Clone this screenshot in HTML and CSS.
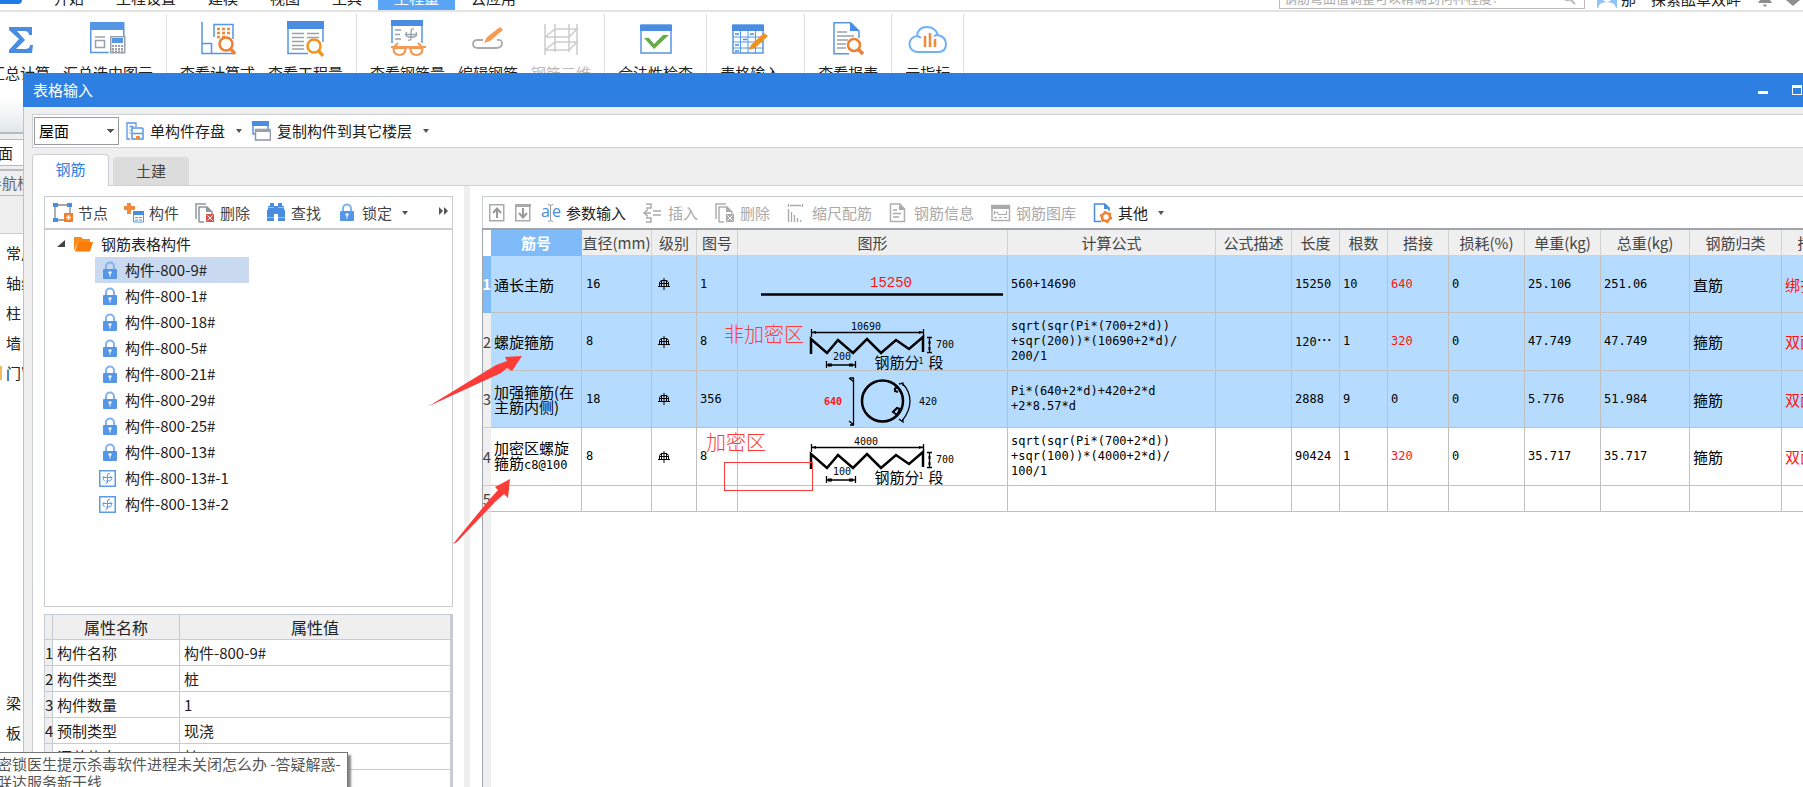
FILE: index.html
```html
<!DOCTYPE html>
<html lang="zh-CN">
<head>
<meta charset="utf-8">
<title>表格输入</title>
<link rel="stylesheet" href="styles.css">
</head>
<body>
<svg class="defs" aria-hidden="true">
  <symbol id="lock" viewBox="0 0 14 19">
    <path d="M3 9V5.5a4 4 0 0 1 8 0V9" fill="none" stroke="#7fb2ee" stroke-width="2"/>
    <rect x="0" y="8" width="14" height="10" rx="1" fill="#5596e6"/>
    <path d="M5.5 10.5h3v2h-1v3h-1v-3h-1z" fill="#fff"/>
  </symbol>
  <symbol id="bar" viewBox="0 0 17 17">
    <rect x=".75" y=".75" width="15.5" height="15.5" fill="#fff" stroke="#5b9bea" stroke-width="1.5"/>
    <path d="M3.500 7.500h10M11 4Q8.500 2.500 8.500 5v7q0 2-2 1M5 6Q3 9 5.500 11M11.500 6q2.500 3-.5 5h-4" fill="none" stroke="#5b9bea"/>
  </symbol>
  <symbol id="grade" viewBox="0 0 12 12">
    <path d="M6 0v12M1.500 8V4.500l1.500-2h6l1.500 2V8M0 8.500h12M3.500 3v5M8.500 3v5M1.500 5.500h9" fill="none" stroke="#000"/>
  </symbol>
  <symbol id="spiral" viewBox="0 0 268 56">
    <path d="M73 40V25L89 39L100 26L115 39L129 25L143 39L158 26L171 35L185 23V38" fill="none" stroke="#000" stroke-width="2.500"/>
    <path d="M73.500 15v8M185.500 15v8M73 18.500h112M189 23.500h5M189 38.500h5M191.500 23v16M88.500 47v7M117.500 47v7M88 51h29" fill="none" stroke="#000" stroke-width="1.300"/>
    <path d="M74 18l4-1v3zM185 18l-4-1v3zM90 49.500h4v3h-4zM111 49.500h4v3h-4zM190.500 27h2v3h-2zM190.500 33h2v3h-2z"/>
  </symbol>
</svg>

<div class="app">
  <header class="menubar">
    <i class="appmark"></i>
    <nav class="menu">
      <button>开始</button><button>工程设置</button><button>建模</button><button>视图</button><button>工具</button><button class="on">工程量</button><button>云应用</button>
    </nav>
    <label class="search"><input type="text" aria-label="搜索" placeholder="钢筋弯曲值调整可以精确到何种程度?"><svg width="14" height="14" viewBox="0 0 14 14"><circle cx="5.500" cy="5.500" r="4" fill="none" stroke="#bbb" stroke-width="1.500"/><path d="M8.500 8.500L13 13" stroke="#bbb" stroke-width="2"/></svg></label>
    <div class="user">
      <svg width="20" height="20" viewBox="0 0 20 20"><path d="M0 0h20v20H0z" fill="#8fc3fa"/><circle cx="10" cy="9" r="5" fill="#fff"/><path d="M1 20q1-6 9-6t9 6z" fill="#fff"/></svg>
      <span>那　探索酝草双畔</span>
    </div>
    <svg class="bell" width="16" height="16" viewBox="0 0 16 16"><path d="M1 12l2-3V5a5 5 0 0 1 10 0v4l2 3zM6 13.500h4l-1 2H7z" fill="#8f8f8f"/></svg>
    <svg class="heart" width="16" height="16" viewBox="0 0 16 16"><path d="M8 15L1 9V4l3-2 4 2 4-2 3 2v5z" fill="#8f8f8f"/></svg>
  </header>

  <section class="ribbon">
    <div class="group">
      <button><svg width="32" height="36" viewBox="0 0 32 36"><path d="M5 6h23v8h-3q0-4-5-4h-7l8 9-9 9h9q5 0 5-4h3l-1 8H5v-3l10-11L5 9z" fill="#4a8cdf"/></svg><span>汇总计算</span></button>
      <button><svg width="36" height="36" viewBox="0 0 36 36"><path d="M.75 2h33v17M.75 2v29.500h18" fill="none" stroke="#5597e5" stroke-width="1.500"/><path d="M0 1h34v8H0z" fill="#5597e5"/><path d="M5 16h10M5.500 19.500h9v7h-9z" fill="none" stroke="#9aa1a8" stroke-width="1.500"/><path d="M20.750 15.750h14v16h-14z" fill="#fff" stroke="#9aa1a8" stroke-width="1.500"/><path d="M22 17h11v5H22z" fill="#5597e5"/><path d="M22 25h11M22 28h11M22 30.500h11" stroke="#9aa1a8" stroke-width="2" stroke-dasharray="2 1"/></svg><span>汇总选中图元</span></button>
    </div>
    <div class="group">
      <button><svg width="36" height="36" viewBox="0 0 36 36"><path d="M2 1v31.500h32M2 22.500h9.500v10M14 16V3.500h19V18" fill="none" stroke="#5597e5" stroke-width="1.500"/><path d="M17 8h13M17 12h13M17 16h8" stroke="#f08a3c" stroke-width="2.500" stroke-dasharray="3 2"/><circle cx="26" cy="23" r="6.500" fill="#fff" stroke="#f0802f" stroke-width="2.500"/><path d="M30 27l5 6" stroke="#f0802f" stroke-width="3.500"/></svg><span>查看计算式</span></button>
      <button><svg width="38" height="36" viewBox="0 0 38 36"><path d="M1 1h35v20M1 1v31.500h20" fill="none" stroke="#5597e5" stroke-width="1.500"/><path d="M0 0h37v8H0z" fill="#4a8cdf"/><path d="M5 12.500h12M5 16.500h12M5 20.500h12M5 24.500h12M5 28h12M20 12.500h12M20 16.500h12" stroke="#9aa1a8" stroke-width="1.500"/><circle cx="27" cy="25" r="6.500" fill="#fff" stroke="#f0951f" stroke-width="2.500"/><path d="M31 29l5 6" stroke="#f0951f" stroke-width="3.500"/></svg><span>查看工程量</span></button>
    </div>
    <div class="group">
      <button><svg width="36" height="38" viewBox="0 0 36 38"><path d="M2 1h30v22M2 1v22" fill="none" stroke="#5597e5" stroke-width="1.500"/><path d="M1 0h32v6H1z" fill="#4a8cdf"/><path d="M5 10h6M5 14.500h5M5 19h6M15 14.500h12M24 9q-3-1-3 3v6q0 3-3 2M17 12q-3 3 1 5M26 12q2 4-2 5h-6" fill="none" stroke="#9aa1a8" stroke-width="1.300"/><path d="M4 27l4-4M32 27l-4-4M1 27h35M15 29q3-3 6 0" fill="none" stroke="#f59a55" stroke-width="2"/><path d="M3.500 28h12q0 7-6 7t-6-7zM20.500 28h12q0 7-6 7t-6-7z" fill="#fff" stroke="#f59a55" stroke-width="2.200"/></svg><span>查看钢筋量</span></button>
      <button><svg width="34" height="36" viewBox="0 0 34 36"><path d="M12 19H7q-5 0-5 4t5 4h18q6 0 6-4.500T26 19" fill="none" stroke="#a8acb0" stroke-width="1.800"/><path d="M13 22l3-6L29 6l3 3-13 11z" fill="#f59b55"/></svg><span>编辑钢筋</span></button>
      <button class="off"><svg width="36" height="36" viewBox="0 0 36 36"><path d="M2 3v31M12 3v28M26 3v28M34 3v31M2 16L12 8h22L26 16H2M2 29l10-8h22l-8 8H2" fill="none" stroke="#ccc" stroke-width="1.500"/></svg><span>钢筋三维</span></button>
    </div>
    <div class="group">
      <button><svg width="32" height="36" viewBox="0 0 32 36"><path d="M1 4h30v28H1z" fill="#fff" stroke="#5597e5" stroke-width="1.500"/><path d="M0 4h32v6H0z" fill="#4a8cdf"/><path d="M4 17h5l5 6L23 14h6L14 28z" fill="#69ab4b"/></svg><span>合法性检查</span></button>
    </div>
    <div class="group wide">
      <button><svg width="36" height="36" viewBox="0 0 36 36"><path d="M1 4h30v28H1z" fill="#fff" stroke="#5597e5" stroke-width="1.500"/><path d="M0 4h32v6H0z" fill="#4a8cdf"/><path d="M1 16h30M1 21h30M1 27h30M8.500 10v22M16 10v22M23.500 10v22" stroke="#5597e5"/><path d="M3 13h4M18 13h4M3 24h4M11 18.500h4M3 30h4" stroke="#4a8cdf" stroke-width="1.500"/><path d="M17 29l2-5L32 12l4 3-13 12z" fill="#f0901f"/></svg><span>表格输入</span></button>
    </div>
    <div class="group">
      <button><svg width="32" height="36" viewBox="0 0 32 36"><path d="M19 1.750H2v31h15M19 2l8 8v7" fill="none" stroke="#5597e5" stroke-width="1.500"/><path d="M18 1l9 9h-9z" fill="#4a8cdf"/><path d="M5 11h10M5 15h17M5 19h11M5 23h9M5 27h9" stroke="#9aa1a8" stroke-width="1.500"/><circle cx="22" cy="24" r="6" fill="#fff" stroke="#f0802f" stroke-width="2.500"/><path d="M26 28l5 5" stroke="#f0802f" stroke-width="3.500"/></svg><span>查看报表</span></button>
    </div>
    <div class="group">
      <button><svg width="40" height="36" viewBox="0 0 40 36"><path d="M10 31a8 8 0 0 1-1-16q1-9 10-9 8 0 11 8 8 2 8 9 0 8-8 8zM8 15q3 0 5 2M30 14q-2 0-4 1" fill="none" stroke="#6fb1f7" stroke-width="2"/><path d="M17 15v11M22 12v14M27 18v8" stroke="#f08a3c" stroke-width="2.500"/></svg><span>云指标</span></button>
    </div>
  </section>

  <aside class="side">
    <div class="side-combo">面</div>
    <div class="side-head">导航栏</div>
    <div class="side-gap"></div>
    <ul class="side-list">
      <li>常用</li><li>轴线</li><li>柱</li><li>墙</li><li class="tab">门窗</li>
    </ul>
    <ul class="side-list low"><li>梁</li><li>板</li></ul>
  </aside>
</div>

<main class="dialog">
  <header class="titlebar">
    <h1>表格输入</h1>
    <button aria-label="最小化"><i class="min"></i></button>
    <button aria-label="最大化"><i class="max"></i></button>
  </header>

  <div class="topbar">
    <select aria-label="楼层"><option>屋面</option></select>
    <button class="drop"><svg width="18" height="18" viewBox="0 0 18 18"><path d="M4 17H1V1h9v4M3.500 4.500h4M3.500 8h1M3.500 11h1" fill="none" stroke="#5597e5" stroke-width="1.300"/><path d="M6 6h10l1 1v10H6z" fill="#fff" stroke="#5597e5" stroke-width="1.500"/><path d="M7 11.500h9" stroke="#5597e5" stroke-width="1.500"/><path d="M10 14h4v3h-4z" fill="#f08a3c"/></svg><span>单构件存盘</span></button>
    <button class="drop"><svg width="19" height="20" viewBox="0 0 19 20"><path d="M1 1h15v12H1z" fill="#fff" stroke="#5597e5" stroke-width="1.500"/><path d="M0 0h17v5H0z" fill="#4a8cdf"/><path d="M3.500 8.500h15v10.500h-15z" fill="#fff" stroke="#8e959c" stroke-width="1.500"/><path d="M3 8h16v3H3z" fill="#9aa1a8"/></svg><span>复制构件到其它楼层</span></button>
  </div>

  <nav class="tabs"><button class="on">钢筋</button><button>土建</button></nav>

  <div class="panes">
    <section class="left">
      <div class="tools">
        <button><svg width="20" height="20" viewBox="0 0 20 20"><path d="M2 2h15v15H2z" fill="none" stroke="#888" stroke-width="1.300"/><path d="M0 0h5v4H0zM14 0h5v4h-5zM0 15h5v4H0z" fill="#4a8cdf"/><path d="M11 10h9v9h-9z" fill="#f0802f"/><path d="M13 14.500h5M15.500 12v5" stroke="#fff" stroke-width="1.500"/></svg><span>节点</span></button>
        <button><svg width="20" height="20" viewBox="0 0 20 20"><path d="M3 0h4v3h4v4H7v4H3V7H0V3h3z" fill="#f08a3c"/><path d="M9.500 9h10v10h-10z" fill="#fff" stroke="#5597e5"/><path d="M9 8h11v4H9z" fill="#4a8cdf"/><path d="M11 14.500h7M11 17h7" stroke="#5597e5" stroke-dasharray="3 1"/></svg><span>构件</span></button>
        <button><svg width="20" height="20" viewBox="0 0 20 20"><path d="M1 16V1h10M4 19V4h8l5 5v2M4 19h5" fill="none" stroke="#8e959c" stroke-width="1.500"/><path d="M11 3l6 6h-6z" fill="#8e959c"/><path d="M11 11h8v8h-8z" fill="#d9534f"/><path d="M12.500 12.500l5 5M17.500 12.500l-5 5" stroke="#fff"/></svg><span>删除</span></button>
        <button><svg width="20" height="20" viewBox="0 0 20 20"><path d="M4 0h4v3h4V0h4v3h2v4h1v11h-7v-7H8v7H1V7h1V3h2z" fill="#4a8cdf"/><path d="M2 4.500h6M12 4.500h6M1 14.500h7M12 14.500h7" stroke="#9cc3f2"/></svg><span>查找</span></button>
        <button class="drop"><svg width="20" height="19"><use href="#lock" x="3" width="14" height="19"/></svg><span>锁定</span></button>
        <button class="more" aria-label="更多"><svg width="10" height="8" viewBox="0 0 10 8"><path d="M0 0l4 4-4 4zM5 0l4 4-4 4z" fill="#555"/></svg></button>
      </div>
      <div class="tree">
        <div class="root"><svg width="9" height="9" viewBox="0 0 9 9"><path d="M8 1v7H0z" fill="#444"/></svg><svg width="19" height="16" viewBox="0 0 19 16"><path d="M0 15V1h7l2 2h7v3H4z" fill="#f98a1c"/><path d="M4 6h15l-3 9.500H1z" fill="#fb7d07"/></svg><span>钢筋表格构件</span></div>
        <ul>
          <li class="sel"><svg width="16" height="19"><use href="#lock" width="14" height="19"/></svg>构件-800-9#</li>
          <li><svg width="16" height="19"><use href="#lock" width="14" height="19"/></svg>构件-800-1#</li>
          <li><svg width="16" height="19"><use href="#lock" width="14" height="19"/></svg>构件-800-18#</li>
          <li><svg width="16" height="19"><use href="#lock" width="14" height="19"/></svg>构件-800-5#</li>
          <li><svg width="16" height="19"><use href="#lock" width="14" height="19"/></svg>构件-800-21#</li>
          <li><svg width="16" height="19"><use href="#lock" width="14" height="19"/></svg>构件-800-29#</li>
          <li><svg width="16" height="19"><use href="#lock" width="14" height="19"/></svg>构件-800-25#</li>
          <li><svg width="16" height="19"><use href="#lock" width="14" height="19"/></svg>构件-800-13#</li>
          <li class="open"><svg width="17" height="17"><use href="#bar" width="17" height="17"/></svg>构件-800-13#-1</li>
          <li class="open"><svg width="17" height="17"><use href="#bar" width="17" height="17"/></svg>构件-800-13#-2</li>
        </ul>
      </div>
      <table class="props">
        <colgroup><col class="n"><col class="k"><col></colgroup>
        <thead><tr><th></th><th>属性名称</th><th>属性值</th></tr></thead>
        <tbody>
          <tr><th>1</th><td>构件名称</td><td>构件-800-9#</td></tr>
          <tr><th>2</th><td>构件类型</td><td>桩</td></tr>
          <tr><th>3</th><td>构件数量</td><td>1</td></tr>
          <tr><th>4</th><td>预制类型</td><td>现浇</td></tr>
          <tr><th></th><td>汇总信息</td><td>桩</td></tr>
          <tr><th></th><td></td><td></td></tr>
        </tbody>
      </table>
    </section>

    <section class="right">
      <div class="tools">
        <button class="off sq" aria-label="上移"><svg width="16" height="18" viewBox="0 0 16 18"><path d="M.75.750h14v16h-14z" fill="none" stroke="#aaa" stroke-width="1.500"/><path d="M8 14V5M4 9l4-4.500L12 9" fill="none" stroke="#999" stroke-width="2"/></svg></button>
        <button class="off sq" aria-label="下移"><svg width="16" height="18" viewBox="0 0 16 18"><path d="M.75.750h14v16h-14z" fill="none" stroke="#aaa" stroke-width="1.500"/><path d="M0 1.500h16" stroke="#aaa" stroke-width="3"/><path d="M8 4v9M4 9l4 4.500L12 9" fill="none" stroke="#999" stroke-width="2"/></svg></button>
        <button class="strong"><svg width="20" height="20" viewBox="0 0 20 20"><text class="ae" x="0" y="14">a</text><text class="ae" x="11" y="14">e</text><path d="M7 1.500q2.500 0 2.500 2v13q0 2-2.500 2M12 1.500q-2.500 0-2.500 2M9.500 16.500q0 2 2.500 2" fill="none" stroke="#999"/></svg><span>参数输入</span></button>
        <button class="off"><svg width="20" height="20" viewBox="0 0 20 20"><path d="M3 1h5v4H3M3 19h5v-4H3M1 10h7M5 6.500L1 10l4 3.500M10 8h8M10 12h8" fill="none" stroke="#aaa" stroke-width="1.500"/></svg><span>插入</span></button>
        <button class="off"><svg width="20" height="20" viewBox="0 0 20 20"><path d="M1 16V1h10M4 19V4h8l5 5v2M4 19h5" fill="none" stroke="#b0b0b0" stroke-width="1.500"/><path d="M11 3l6 6h-6z" fill="#aaa"/><path d="M11 11h8v8h-8z" fill="#aaa"/><path d="M12.500 12.500l5 5M17.500 12.500l-5 5" stroke="#fff"/></svg><span>删除</span></button>
        <button class="off"><svg width="20" height="20" viewBox="0 0 20 20"><path d="M1.500 1v3M15.500 1v3M3 2.500h11M1.500 6v13M4.500 9v10M7.500 12v7M10.500 15v4M13.500 17v2" fill="none" stroke="#aaa" stroke-width="1.300"/></svg><span>缩尺配筋</span></button>
        <button class="off"><svg width="20" height="20" viewBox="0 0 20 20"><path d="M11 1H1.500v17.500h14V6z" fill="none" stroke="#b0b0b0" stroke-width="1.500"/><path d="M10 1l6 6h-6z" fill="#aaa"/><path d="M4 7h4M4 10.500h8M4 14h6" stroke="#aaa" stroke-width="1.500"/></svg><span>钢筋信息</span></button>
        <button class="off"><svg width="20" height="20" viewBox="0 0 20 20"><path d="M1 2.500h17.500v15H1z" fill="none" stroke="#b0b0b0" stroke-width="1.500"/><path d="M0 2h19v4H0z" fill="#aaa"/><path d="M3.500 8v4M3 9.500h4v2h8M15.500 8v4M3 14.500h3M8 14.500h3M13 14.500h3" fill="none" stroke="#aaa"/></svg><span>钢筋图库</span></button>
        <button class="strong drop"><svg width="20" height="20" viewBox="0 0 20 20"><path d="M12 1H1.500v17.500H8M12 1l4 4v3" fill="none" stroke="#4a8cdf" stroke-width="1.500"/><path d="M11 0l6 6h-6z" fill="#4a8cdf"/><circle cx="13" cy="14" r="4" fill="#fff" stroke="#f0802f" stroke-width="2.500"/><circle cx="13" cy="14" r="5.500" fill="none" stroke="#f0802f" stroke-width="1.500" stroke-dasharray="2.500 3.260"/></svg><span>其他</span></button>
      </div>

      <div class="grid">
        <table>
          <colgroup><col class="c0"><col class="c1"><col class="c2"><col class="c3"><col class="c4"><col class="c5"><col class="c6"><col class="c7"><col class="c8"><col class="c8"><col class="c10"><col class="c7"><col class="c7"><col class="c13"><col class="c14"><col class="c14"></colgroup>
          <thead><tr><th></th><th class="on">筋号</th><th>直径(mm)</th><th>级别</th><th>图号</th><th>图形</th><th>计算公式</th><th>公式描述</th><th>长度</th><th>根数</th><th>搭接</th><th>损耗(%)</th><th>单重(kg)</th><th>总重(kg)</th><th>钢筋归类</th><th>搭接形式</th></tr></thead>
          <tbody>
            <tr class="sel"><th class="on">1</th><td class="zh">通长主筋</td><td class="in">16</td><td class="mid"><svg width="12" height="12"><use href="#grade"/></svg></td><td>1</td>
              <td class="fig"><svg width="268" height="56" viewBox="0 0 268 56"><text class="big" x="153" y="31">15250</text><path d="M23 38.500h242" stroke="#000" stroke-width="2.500"/></svg></td>
              <td>560+14690</td><td></td><td>15250</td><td>10</td><td class="red">640</td><td>0</td><td>25.106</td><td>251.06</td><td class="zh">直筋</td><td class="zh red">绑扎</td></tr>
            <tr class="sel"><th>2</th><td class="zh">螺旋箍筋</td><td class="in">8</td><td class="mid"><svg width="12" height="12"><use href="#grade"/></svg></td><td>8</td>
              <td class="fig"><svg width="268" height="56" viewBox="0 0 268 56"><use href="#spiral" width="268" height="56"/><text x="128" y="16">10690</text><text x="207" y="34">700</text><text x="104" y="46">200</text><text class="cn" x="159" y="54">钢筋分</text><text class="sub" x="183" y="50">1</text><text class="cn" x="198" y="54">段</text></svg></td>
              <td>sqrt(sqr(Pi*(700+2*d))<br>+sqr(200))*(10690+2*d)/<br>200/1</td><td></td><td>120<span class="dots">⋯</span></td><td>1</td><td class="red">320</td><td>0</td><td>47.749</td><td>47.749</td><td class="zh">箍筋</td><td class="zh red">双面焊</td></tr>
            <tr class="sel"><th>3</th><td class="zh">加强箍筋(在<br>主筋内侧)</td><td class="in">18</td><td class="mid"><svg width="12" height="12"><use href="#grade"/></svg></td><td>356</td>
              <td class="fig"><svg width="268" height="56" viewBox="0 0 268 56"><text class="warn" x="95" y="34">640</text><text x="190" y="34">420</text><circle cx="144.500" cy="30" r="20.500" fill="none" stroke="#000" stroke-width="2.500"/><path d="M115.500 7v47M112 7h4M111 7l5 4M112 54h4M111 50l5 4M164 12q8 8 8 18t-8 20M161 13l4-1v3M161 48l4 3v-3" fill="none" stroke="#000" stroke-width="1.300"/><path d="M160 17q-4-1-3 3l3 1M159 44l-4-3 4-4 3 1z" fill="none" stroke="#000" stroke-width="2"/></svg></td>
              <td>Pi*(640+2*d)+420+2*d<br>+2*8.57*d</td><td></td><td>2888</td><td>9</td><td>0</td><td>0</td><td>5.776</td><td>51.984</td><td class="zh">箍筋</td><td class="zh red">双面焊</td></tr>
            <tr><th>4</th><td class="zh">加密区螺旋<br>箍筋<span class="mono">c8@100</span></td><td class="in">8</td><td class="mid"><svg width="12" height="12"><use href="#grade"/></svg></td><td>8</td>
              <td class="fig"><svg width="268" height="56" viewBox="0 0 268 56"><use href="#spiral" width="268" height="56"/><text x="128" y="16">4000</text><text x="207" y="34">700</text><text x="104" y="46">100</text><text class="cn" x="159" y="54">钢筋分</text><text class="sub" x="183" y="50">1</text><text class="cn" x="198" y="54">段</text></svg></td>
              <td>sqrt(sqr(Pi*(700+2*d))<br>+sqr(100))*(4000+2*d)/<br>100/1</td><td></td><td>90424</td><td>1</td><td class="red">320</td><td>0</td><td>35.717</td><td>35.717</td><td class="zh">箍筋</td><td class="zh red">双面焊</td></tr>
            <tr class="last"><th>5</th><td></td><td></td><td></td><td></td><td></td><td></td><td></td><td></td><td></td><td></td><td></td><td></td><td></td><td></td><td></td></tr>
          </tbody>
        </table>
      </div>
    </section>
  </div>
</main>

<svg class="marks" aria-hidden="true">
  <path d="M522 356L505 357L507 361L496 365L428 406.500L501 373L507 368L512 371zM510 479L495 487L498 490L489 500L453 544L457 542L495 502L504 494L508 498z" fill="#fd3b38"/>
  <rect x="724.500" y="462.500" width="88" height="28" fill="none" stroke="#fd3b38"/>
  <text x="724" y="342">非加密区</text>
  <text x="706" y="450">加密区</text>
</svg>

<div class="tip" role="tooltip">密锁医生提示杀毒软件进程未关闭怎么办 -答疑解惑-<br>联达服务新干线</div>
</body>
</html>
```
FILE: styles.css
```css
* { box-sizing: border-box; }
body {
  margin: 0;
  height: 100vh;
  overflow: hidden;
  position: relative;
  background: #fff;
  color: #222;
  font: 15px/20px "Noto Sans CJK SC", sans-serif;
}
button {
  border: 0;
  padding: 0;
  background: none;
  font: inherit;
  color: inherit;
  white-space: nowrap;
}
ul { list-style: none; margin: 0; padding: 0; }
svg { flex: none; display: block; }
.defs { position: absolute; width: 0; height: 0; }

/* main window */
.menubar {
  display: flex;
  align-items: flex-end;
  height: 12px;
  border-bottom: 2px solid #e4e4e4;
}
.appmark {
  width: 22px;
  height: 4px;
  margin: 0 16px 6px 0;
  background: #1e7be8;
  border-radius: 0 0 8px 0;
}
.menu { display: flex; flex: 1; align-items: flex-end; height: 12px; }
.menu button { height: 24px; line-height: 24px; padding: 0 16px; flex: none; }
.menu .on { background: #5aa5f5; color: #fff; }
.search {
  display: flex;
  align-items: center;
  width: 306px;
  height: 22px;
  border: 1px solid #bbb;
  padding: 0 8px 0 4px;
  margin-right: 12px;
  margin-bottom: 1px;
}
.search input {
  flex: 1;
  min-width: 0;
  border: 0;
  padding: 0;
  outline: 0;
  background: none;
  font: 13px/20px "Noto Sans CJK SC", sans-serif;
}
.search input::placeholder { color: #aaa; }
.user { display: flex; align-items: flex-end; gap: 4px; margin-bottom: 2px; }
.user span { line-height: 18px; white-space: nowrap; }
.bell { margin: 0 12px 3px 16px; }
.heart { margin: 0 2px 3px 0; }

.ribbon { display: flex; height: 86px; padding: 2px 0; margin-left: -23px; }
.group {
  display: flex;
  gap: 13px;
  height: 76px;
  padding: 6px 13px 0;
  border-right: 1px solid #e0e0e0;
}
.group.wide { padding-right: 24px; }
.group button {
  display: flex;
  flex-direction: column;
  align-items: center;
  justify-content: flex-start;
  height: 66px;
}
.group svg { margin-bottom: 5px; height: 38px; }
.group .off { color: #bbb; }

.side {
  width: 32px;
  overflow: hidden;
  background: linear-gradient(#fff, #e2e8e9 34px, #888e93 35px, #efefef 36px);
  padding-top: 41px;
}
.side-combo {
  height: 27px;
  line-height: 25px;
  background: #fff;
  border: 1px solid #b8b8b8;
  border-width: 1px 0;
  margin-bottom: 3px;
  text-indent: -2px;
}
.side-head {
  border: 1px solid #b8bcc2;
  border-width: 2px 0 1px;
  height: 27px;
  line-height: 23px;
  color: #666;
  text-indent: -13px;
  white-space: nowrap;
}
.side-gap { height: 37px; }
.side-list {
  background: #fff;
  border-top: 1px solid #ccc;
  padding-top: 4px;
  white-space: nowrap;
}
.side-list li { height: 30px; line-height: 30px; padding-left: 6px; }
.side-list .tab { background: linear-gradient(#f3b95b, #f3b95b) 0 8px / 2px 14px no-repeat; }
.side-list.low { border: 0; padding-top: 300px; }

/* dialog */
.dialog {
  position: absolute;
  inset: 73px 0 0 23px;
  display: flex;
  flex-direction: column;
  background: #efefef;
  border-left: 1px solid #bcc2ca;
}
.titlebar {
  display: flex;
  align-items: center;
  height: 34px;
  margin-left: -1px;
  padding: 0 1px 0 10px;
  background: #2d80e2;
  color: #fff;
}
.titlebar h1 { flex: 1; margin: 0; font-size: 15px; font-weight: 400; }
.titlebar button { margin-left: 24px; height: 14px; }
.titlebar i { display: block; width: 10px; }
.min { height: 3px; background: #fff; margin-top: 4px; }
.max { height: 10px; border: 1px solid #fff; border-top-width: 3px; }

.topbar {
  display: flex;
  align-items: center;
  height: 34px;
  margin: 7px 0 6px 8px;
  padding-left: 1px;
  background: #fff;
  border: 1px solid #ccd0d5;
  border-right: 0;
}
select {
  width: 85px;
  height: 28px;
  padding: 0 4px;
  border: 1px solid #9a9a9a;
  border-radius: 0;
  appearance: none;
  font: inherit;
  color: #000;
  background: conic-gradient(from 315deg at 50% 100%, #555 90deg, #fff 0) 72px 11px / 7px 4px no-repeat #fff;
}
.drop::after {
  content: "";
  border: 3px solid transparent;
  border-top: 4px solid #555;
  border-bottom: 0;
  margin-left: 5px;
}
.topbar .drop { display: flex; align-items: center; gap: 6px; margin-left: 7px; padding-right: 3px; }

.tabs { display: flex; align-items: flex-end; gap: 4px; padding-left: 8px; height: 31px; }
.tabs button { width: 76px; height: 28px; border-radius: 4px 4px 0 0; background: #dcdcdc; color: #444; }
.tabs .on {
  width: 77px;
  height: 32px;
  margin-bottom: -1px;
  padding-bottom: 3px;
  border: 1px solid #ccd0d5;
  border-bottom: 0;
  background: #fff;
  color: #2d80e2;
  position: relative;
}

.panes {
  flex: 1;
  min-height: 0;
  display: flex;
  margin-left: 8px;
  border: 1px solid #ccd0d5;
  border-width: 1px 0 0 1px;
  background: #fff;
}
.left {
  width: 431px;
  flex: none;
  padding: 10px 11px 0;
}
.right {
  flex: 1;
  min-width: 0;
  display: flex;
  flex-direction: column;
  padding: 10px 0 0 12px;
  border-left: 6px solid #efefef;
}
.tools {
  display: flex;
  align-items: center;
  gap: 16px;
  height: 32px;
  padding-left: 8px;
  border: 1px solid #c9cdd3;
  border-bottom: 0;
  color: #444;
}
.tools button { display: flex; align-items: center; gap: 5px; }
.more { margin: 0 3px 4px auto; }
.right .tools { gap: 17px; padding-left: 6px; border-right: 0; color: #222; }
.tools .off { color: #aaa; }
.tools .sq { margin-right: -7px; }
.ae { font: 16px "Open Sans", sans-serif; fill: #4a8cdf; }

.tree { height: 379px; border: 1px solid #c9cdd3; border-top-width: 2px; margin-bottom: 7px; }
.root { display: flex; align-items: center; height: 27px; padding-left: 12px; }
.root svg + svg { margin: 0 8px; }
.tree ul { padding-left: 50px; color: #222; }
.tree li { display: flex; align-items: center; gap: 6px; width: 204px; height: 26px; padding-left: 8px; }
.tree li.sel { width: 154px; }
.tree .open { padding-left: 4px; gap: 9px; }
.sel { background: #c9d9f0; }

table { border-collapse: separate; border-spacing: 0; table-layout: fixed; }
th, td { padding: 0; font-weight: 400; overflow: hidden; white-space: nowrap; }
.props { width: 100%; border: 1px solid #c5ccd6; border-bottom: 0; border-right-width: 2px; }
.props .n { width: 8px; }
.props .k { width: 127px; }
.props th, .props td { border: 1px solid #c5ccd6; border-width: 0 1px 1px 0; height: 26px; }
.props td { padding-left: 4px; }
.props th { background: #efefef; overflow: visible; }
.props thead th { height: 25px; font-size: 16px; line-height: 20px; }

.grid {
  flex: 1;
  min-height: 0;
  overflow: hidden;
  border: 1px solid #a0a5ab;
  border-width: 2px 0 0 1px;
  background: linear-gradient(#efefef, #efefef) 0 0 / 8px 100% no-repeat #fff;
}
.grid table { width: 1389px; }
.c0 { width: 8px; } .c1 { width: 91px; } .c2 { width: 70px; } .c3 { width: 45px; }
.c4 { width: 41px; } .c5 { width: 270px; } .c6 { width: 208px; } .c7 { width: 76px; }
.c8 { width: 48px; } .c10 { width: 61px; } .c13 { width: 89px; } .c14 { width: 92px; }
.grid th, .grid td { border: 1px solid #c0c0c0; border-width: 0 1px 1px 0; }
.grid th { background: #efefef; color: #444; border-color: #d2d2d2; }
.grid thead th { height: 26px; }
.grid thead th:first-child { background: #fff; border-color: #fff; }
.grid .on { background: #80bbf9; border-color: #80bbf9; color: #fff; font-weight: 700; }
.grid tbody th { border-right: 0; overflow: visible; direction: rtl; }
.grid td {
  height: 57px;
  padding: 0 0 0 3px;
  color: #000;
  font: 12px/15px "DejaVu Sans Mono", monospace;
}
.grid tr:nth-child(even) td { height: 58px; }
.grid .last td { height: 26px; }
.grid .sel td { background: #b5dcff; }
.grid td.zh { font: 15px/15px "Noto Sans CJK SC", sans-serif; }
.grid td.in { padding-left: 4px; }
.grid td.mid { padding-left: 6px; }
.grid td.fig { padding: 0; }
.grid td.red { color: #f11; }
.mono { font: 12px/15px "DejaVu Sans Mono", monospace; }
.dots { font: 15px/12px "Noto Sans CJK SC", sans-serif; }
.fig text { font: 10px "DejaVu Sans Mono", monospace; text-anchor: middle; }
.fig text.big { font: 14px "Liberation Mono", monospace; fill: #f11; }
.fig text.warn { font-weight: 700; fill: #f11; }
.fig text.cn { font: 15px "Noto Sans CJK SC", sans-serif; }
.fig text.sub { font-size: 8px; }

/* annotations and hover tip */
.marks { position: absolute; left: 0; top: 0; width: 100%; height: 100%; pointer-events: none; }
.marks text { font: 300 20px "Noto Sans CJK SC", sans-serif; fill: #fd3b38; }
.tip {
  position: absolute;
  left: -8px;
  bottom: 0;
  height: 35px;
  overflow: hidden;
  padding: 2px 6px 0 4px;
  background: #fff;
  border: 1px solid #767676;
  border-bottom: 0;
  box-shadow: 3px 3px 2px #888;
  color: #555;
  line-height: 18px;
  white-space: nowrap;
}
```
